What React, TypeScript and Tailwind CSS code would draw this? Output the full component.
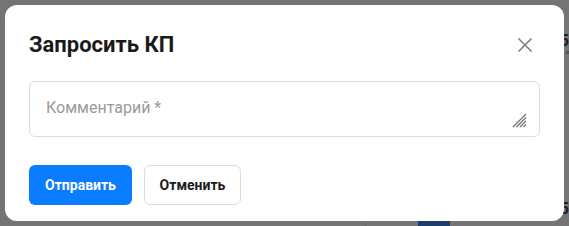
import React from "react";

function CloseIcon() {
  return (
    <svg width="14" height="14" viewBox="0 0 14 14" fill="none" stroke="#7a7a7a" strokeWidth="1.5" strokeLinecap="square">
      <path d="M1 1L13 13M13 1L1 13" />
    </svg>
  );
}

function ResizeGrip() {
  return (
    <svg width="15" height="15" viewBox="0 0 15 15" fill="none" stroke="#6f6f6f" strokeWidth="1.2">
      <path d="M1 14L14 1M4.5 14L14 4.5M8 14L14 8M11.5 14L14 11.5" />
    </svg>
  );
}

export default function App() {
  return (
    <div className="relative h-[226px] w-[569px] overflow-hidden bg-[#747474]" style={{ fontFamily: "Roboto, 'Liberation Sans', sans-serif" }}>
      {/* page behind the overlay */}
      <div className="absolute right-0 top-[33px] text-[16px] font-bold leading-none text-[#1f1f1f]">5</div>
      <div className="absolute right-0 top-[51px] h-[3px] w-[3px] bg-[#555]" />
      <div className="absolute right-0 top-[201px] text-[16px] font-bold leading-none text-[#1f1f1f]">5</div>
      <div className="absolute left-[418px] top-[221px] h-[6px] w-[32px] bg-[#1d3d6b]" />
      <div className="absolute left-[365px] top-[220px] h-[6px] w-px bg-[#666]" />

      <div className="relative ml-[5px] mt-[5px] flex w-[559px] flex-col rounded-xl bg-white px-6 pb-4 pt-6">
        <div className="flex h-8 items-center justify-between">
          <h2 className="text-[22px] font-bold leading-8 text-[#1a1a1a]">Запросить КП</h2>
          <button className="mr-[8px] flex h-[14px] w-[14px] items-center justify-center">
            <CloseIcon />
          </button>
        </div>

        <div className="relative mt-5">
          <textarea
            placeholder="Комментарий *"
            className="block h-[56px] w-full resize-none rounded-md border border-[#dcdcdc] px-4 py-[14px] text-[16px] leading-6 text-[#222] outline-none placeholder:text-[#9a9a9a]"
          />
          <span className="pointer-events-none absolute bottom-[9px] right-[13px]">
            <ResizeGrip />
          </span>
        </div>

        <div className="mt-7 flex gap-3">
          <button className="h-10 w-[103px] rounded-md bg-[#0a7cff] text-[14px] font-bold text-white">Отправить</button>
          <button className="h-10 w-[97px] rounded-md border border-[#dcdcdc] bg-white text-[14px] font-bold text-[#1a1a1a]">Отменить</button>
        </div>
      </div>
    </div>
  );
}
